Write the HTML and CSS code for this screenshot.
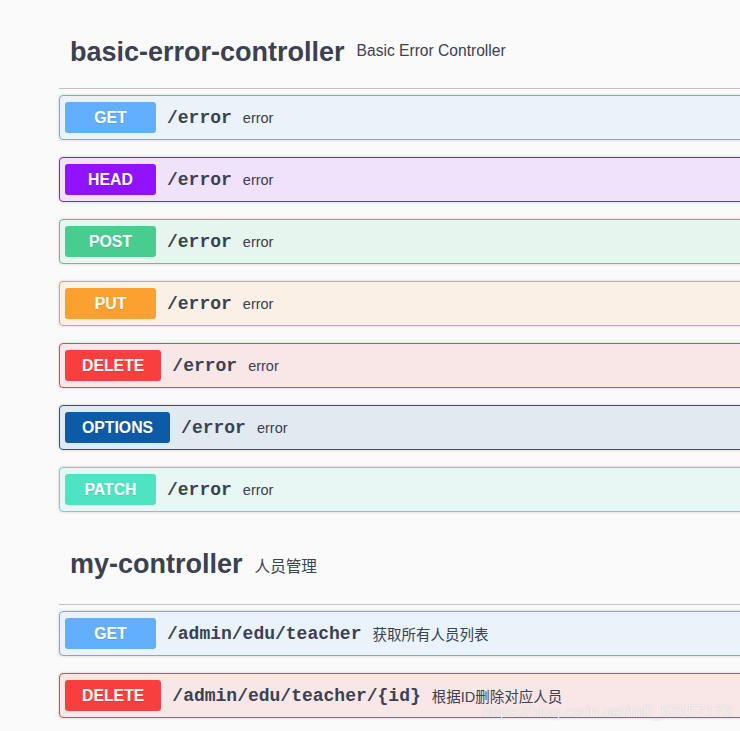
FILE: index.html
```html
<!DOCTYPE html>
<html lang="zh-CN">
<head>
<meta charset="utf-8">
<title>Swagger UI</title>
<link rel="stylesheet" href="styles.css">
</head>
<body>
<div class="wrapper">
  <section class="tag-section">
    <h4 class="tag-header"><span class="tag-name">basic-error-controller</span><small class="tag-desc">Basic Error Controller</small></h4>
    <div class="opblock opblock-get"><span class="method">GET</span><span class="path">/error</span><span class="summary">error</span></div>
    <div class="opblock opblock-head"><span class="method">HEAD</span><span class="path">/error</span><span class="summary">error</span></div>
    <div class="opblock opblock-post"><span class="method">POST</span><span class="path">/error</span><span class="summary">error</span></div>
    <div class="opblock opblock-put"><span class="method">PUT</span><span class="path">/error</span><span class="summary">error</span></div>
    <div class="opblock opblock-delete"><span class="method">DELETE</span><span class="path">/error</span><span class="summary">error</span></div>
    <div class="opblock opblock-options"><span class="method">OPTIONS</span><span class="path">/error</span><span class="summary">error</span></div>
    <div class="opblock opblock-patch"><span class="method">PATCH</span><span class="path">/error</span><span class="summary">error</span></div>
  </section>
  <section class="tag-section">
    <h4 class="tag-header tag-header-cjk"><span class="tag-name">my-controller</span><small class="tag-desc">人员管理</small></h4>
    <div class="opblock opblock-get"><span class="method">GET</span><span class="path">/admin/edu/teacher</span><span class="summary">获取所有人员列表</span></div>
    <div class="opblock opblock-delete"><span class="method">DELETE</span><span class="path">/admin/edu/teacher/{id}</span><span class="summary">根据ID删除对应人员</span></div>
  </section>
</div>
<div class="watermark">https://blog.csdn.net/m0_53157173</div>
</body>
</html>
```
FILE: styles.css
```css
html, body {
  margin: 0;
  padding: 0;
}
body {
  background: #fafafa;
  overflow: hidden;
  font-family: "Liberation Sans", Arial, "Noto Sans CJK SC", sans-serif;
  color: #3b4151;
  position: relative;
  height: 731px;
}
.wrapper {
  padding-top: 17px;
  margin-left: 59px;
  width: 760px;
}
.tag-header {
  margin: 0 0 6px;
  padding: 20px 20px 20px 11px;
  border-bottom: 1px solid rgba(59, 65, 81, 0.3);
  font-size: 27px;
  line-height: 31px;
  font-weight: bold;
  white-space: nowrap;
}
.tag-header-cjk {
  padding-bottom: 24px;
}
.tag-name {
  font-size: 27px;
  font-weight: bold;
  color: #3b4151;
}
.tag-desc {
  font-size: 15.6px;
  font-weight: normal;
  line-height: 1;
  margin-left: 12px;
  vertical-align: 5px;
  color: #3b4151;
  font-family: "Liberation Sans", Arial, "Noto Sans CJK SC", sans-serif;
}
.tag-header-cjk .tag-desc {
  vertical-align: 1px;
}
.opblock {
  display: flex;
  align-items: center;
  padding: 6px 5px;
  margin: 0 0 17px;
  border: 1px solid #000;
  border-radius: 4px;
  box-shadow: 0 0 3px rgba(0, 0, 0, 0.19);
  white-space: nowrap;
}
.method {
  box-sizing: border-box;
  min-width: 91px;
  height: 31px;
  padding: 0 17px;
  border-radius: 3px;
  color: #fff;
  font-size: 15.8px;
  font-weight: bold;
  line-height: 31px;
  text-align: center;
  text-shadow: 0 1px 0 rgba(0, 0, 0, 0.1);
}
.path {
  padding: 0 11px;
  font-family: "Liberation Mono", "Courier New", monospace;
  font-size: 18px;
  font-weight: bold;
  color: #3b4151;
}
.summary {
  font-size: 14.5px;
  color: #3b4151;
  font-family: "Liberation Sans", Arial, "Noto Sans CJK SC", sans-serif;
}
.opblock-get { background: rgba(97, 175, 254, 0.1); border-color: #61affe; }
.opblock-get .method { background: #61affe; }
.opblock-head { background: rgba(144, 18, 254, 0.1); border-color: #9012fe; }
.opblock-head .method { background: #9012fe; }
.opblock-post { background: rgba(73, 204, 144, 0.1); border-color: #49cc90; }
.opblock-post .method { background: #49cc90; }
.opblock-put { background: rgba(252, 161, 48, 0.1); border-color: #fca130; }
.opblock-put .method { background: #fca130; }
.opblock-delete { background: rgba(249, 62, 62, 0.1); border-color: #f93e3e; }
.opblock-delete .method { background: #f93e3e; }
.opblock-options { background: rgba(13, 90, 167, 0.1); border-color: #0d5aa7; }
.opblock-options .method { background: #0d5aa7; }
.opblock-patch { background: rgba(80, 227, 194, 0.1); border-color: #50e3c2; }
.opblock-patch .method { background: #50e3c2; }
.watermark {
  position: absolute;
  left: 482px;
  top: 703px;
  font-family: "Liberation Sans", Arial, sans-serif;
  font-size: 16px;
  line-height: 18px;
  color: rgba(255, 255, 255, 0.8);
  text-shadow: 0 0 1px rgba(0, 0, 0, 0.22);
  white-space: nowrap;
}
```
